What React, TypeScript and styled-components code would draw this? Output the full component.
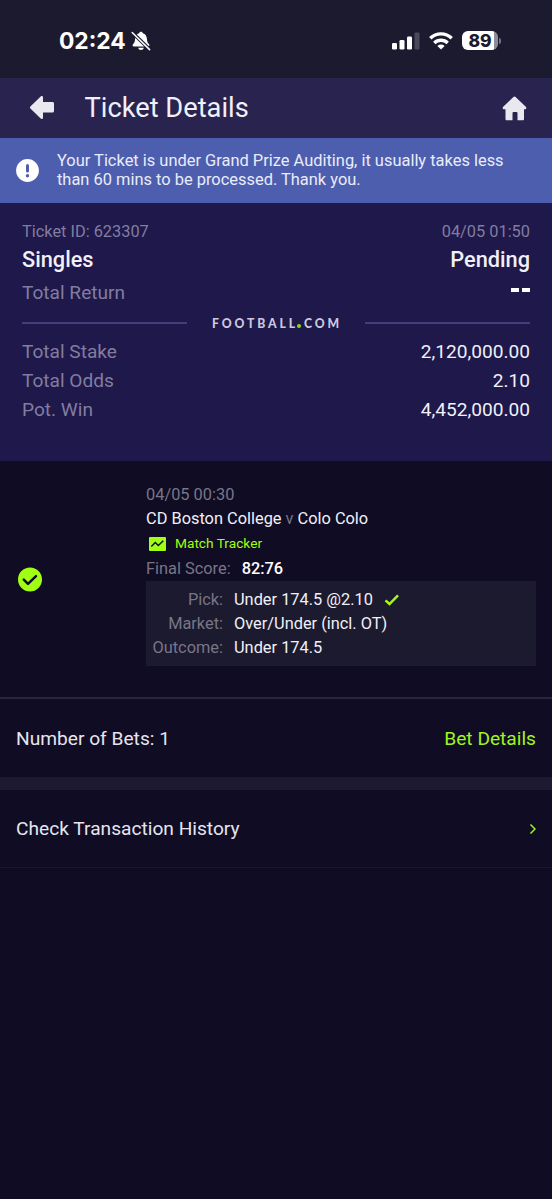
import React from "react";
import styled, { createGlobalStyle } from "styled-components";

const Global = createGlobalStyle`
  * { box-sizing: border-box; }
  body { margin: 0; background: #0f0c24; }
`;

const Screen = styled.div`
  display: flex;
  flex-direction: column;
  width: 100%;
  min-height: 1199px;
  background: #0f0c24;
  color: #f1f0f8;
  font-family: Roboto, "Liberation Sans", sans-serif;
  font-size: 19.17px;
`;

const StatusBar = styled.div`
  display: flex;
  align-items: center;
  justify-content: space-between;
  height: 78px;
  padding: 3px 51px 0 59px;
  background: #1c1a2e;
  color: #fff;
`;

const StatusGroup = styled.div<{ $gap: number }>`
  display: flex;
  align-items: center;
  gap: ${(p) => p.$gap}px;
`;

const Clock = styled.span`
  font: 700 22.8px/28px Inter, sans-serif;
`;

const Battery = styled.div`
  display: flex;
  align-items: center;
  gap: 1px;
`;

const BatteryBody = styled.div`
  display: flex;
  justify-content: center;
  width: 36px;
  height: 19px;
  border-radius: 6px;
  background: linear-gradient(90deg, #fff 32px, #8d8c97 32px);
  color: #1c1a2e;
  font: 800 17.5px/20px Inter, sans-serif;
`;

const BatteryTip = styled.div`
  width: 2px;
  height: 6px;
  border-radius: 0 2px 2px 0;
  background: #777583;
`;

const Header = styled.header`
  display: flex;
  align-items: center;
  height: 60px;
  padding: 0 25px 0 29px;
  background: #28244f;
`;

const Title = styled.h1`
  flex: 1;
  margin: 0 0 0 29.5px;
  font-size: 27.25px;
  font-weight: 400;
  line-height: 60px;
`;

const Banner = styled.div`
  display: flex;
  align-items: center;
  height: 65px;
  padding: 0 16px;
  gap: 18px;
  background: #4e5eae;
  color: #e9ecfb;
`;

const BannerText = styled.p`
  margin: 0;
  padding-bottom: 1px;
  font-size: 16.43px;
  line-height: 19px;
`;

const Summary = styled.section`
  height: 258px;
  padding: 18px 22px 0;
  background: #1f184a;
`;

const SummaryRow = styled.div<{ $height: number; $size?: number; $weight?: number }>`
  display: flex;
  justify-content: space-between;
  height: ${(p) => p.$height}px;
  line-height: ${(p) => p.$height}px;
  font-size: ${(p) => p.$size ?? 19.1}px;
  font-weight: ${(p) => p.$weight ?? 400};
`;

const Muted = styled.span`
  color: #827da0;
`;

const Dashes = styled.span`
  display: flex;
  gap: 3px;
  padding-top: 12px;

  &::before,
  &::after {
    content: "";
    width: 8px;
    height: 3.5px;
    background: #fff;
  }
`;

const BrandRow = styled.div`
  display: flex;
  align-items: center;
  justify-content: space-between;
  height: 27px;
  padding-bottom: 2px;
`;

const Rule = styled.div`
  width: 165px;
  height: 2px;
  background: #453d75;
`;

const Brand = styled.div`
  display: flex;
  align-items: center;
  margin-right: -2px;
  padding-top: 2px;
  color: #cbc8dd;
  font: 900 12.2px/14px Lato, sans-serif;
  letter-spacing: 2.9px;
`;

const BrandDot = styled.i`
  width: 4px;
  height: 4px;
  margin: 5px 3px 0 -1px;
  border-radius: 50%;
  background: #8fd51b;
`;

const Bet = styled.section`
  display: flex;
  align-items: center;
  height: 238px;
  padding: 0 16px 0 18px;
  border-bottom: 2px solid #29263f;
`;

const BetInfo = styled.div`
  flex: 1;
  margin-left: 104px;
  padding-bottom: 9px;
  font-size: 16.38px;
`;

const BetLine = styled.div<{ $height: number; $gap?: number; $indent?: number }>`
  display: flex;
  align-items: center;
  gap: ${(p) => p.$gap ?? 0}px;
  height: ${(p) => p.$height}px;
  padding-left: ${(p) => p.$indent ?? 0}px;
  line-height: ${(p) => p.$height}px;
  white-space: pre;
`;

const Dim = styled.span`
  color: #787587;
`;

const Tracker = styled.span`
  color: #a0ff14;
  font-size: 13.7px;
`;

const Score = styled.span`
  font-weight: 500;
  color: #fff;
`;

const PickBox = styled.div`
  display: grid;
  grid-template-columns: 77px 1fr;
  grid-auto-rows: 24px;
  column-gap: 11px;
  height: 85px;
  padding-top: 7px;
  background: #1c1a2e;
  line-height: 24px;
`;

const PickLabel = styled(Dim)`
  text-align: right;
`;

const PickValue = styled.span`
  display: flex;
  align-items: center;
  gap: 11px;
`;

const ListRow = styled.div<{ $height: number }>`
  display: flex;
  align-items: center;
  justify-content: space-between;
  height: ${(p) => p.$height}px;
  padding: 0 16px;
  color: #e6e5ee;
`;

const Band = styled.div`
  height: 13px;
  background: #1c1a2e;
`;

const HistoryRow = styled(ListRow)`
  padding-bottom: 1px;
  border-bottom: 1px solid #1a172e;
`;

const Link = styled.span`
  color: #a0f51e;
`;

const BellOff = () => (
  <svg width="20" height="20" viewBox="0 0 20 20">
    <path d="M10 .8c.9 0 1.600.6 1.800 1.400 2.600.8 4 2.900 4.100 5.500.1 3.200.9 4.300 2.100 5.500.8.9.5 2.200-.9 2.200H2.900c-1.400 0-1.700-1.300-.9-2.200 1.200-1.200 2-2.300 2.100-5.500.1-2.600 1.500-4.700 4.100-5.500C8.400 1.400 9.100.8 10 .8zM7.200 16.800h5.600c-.3 1.400-1.400 2.200-2.800 2.200s-2.500-.8-2.800-2.200z" fill="#fff" />
    <path d="M1.300 1.500l17.400 17" stroke="#1c1a2e" strokeWidth="3.600" />
    <path d="M1.200 1.500l17.400 17.100" stroke="#fff" strokeWidth="1.500" strokeLinecap="round" />
  </svg>
);

const Signal = () => (
  <svg width="28" height="18" viewBox="0 0 28 18" fill="#fff">
    <rect x="0" y="11" width="5" height="6.500" rx="1.300" />
    <rect x="7.500" y="8" width="5" height="9.500" rx="1.300" />
    <rect x="15" y="4.500" width="5" height="13" rx="1.300" />
    <rect x="22.500" y="0.500" width="5" height="17" rx="1.300" fill="#4b4959" />
  </svg>
);

const Wifi = () => (
  <svg width="24" height="18" viewBox="0 0 24 18" fill="none" stroke="#fff" strokeWidth="3.400">
    <path d="M1.300 6.300a15.200 15.200 0 0 1 21.400 0" />
    <path d="M5.300 11a9.600 9.600 0 0 1 13.400 0" />
    <path d="M12 17.600l-3.600-3.700a5.200 5.200 0 0 1 7.200 0z" fill="#fff" stroke="none" />
  </svg>
);

const BackArrow = () => (
  <svg width="26" height="24" viewBox="0 0 26 24" fill="#e9e8ee">
    <path d="M1.400 10.500L11.700.4c.9-.8 2.300-.3 2.300.9V6h9.500c.9 0 1.500.6 1.500 1.500V15c0 .9-.6 1.500-1.500 1.500H14v5.200c0 1.200-1.400 1.700-2.300.9L1.400 12.500c-.6-.6-.6-1.400 0-2z" />
  </svg>
);

const Home = () => (
  <svg width="25" height="25" viewBox="0 0 25 25" fill="#e9e8ee">
    <path d="M11.400 1c.7-.7 1.500-.7 2.200 0l10.200 9.800c1 1 .4 2.400-.8 2.400h-1V23c0 .8-.5 1.300-1.300 1.300h-5.200v-7c0-.8-.5-1.300-1.200-1.300h-2.600c-.7 0-1.200.5-1.200 1.300v7H4.800c-.8 0-1.300-.5-1.300-1.300v-9.800H2c-1.200 0-1.800-1.400-.8-2.400z" />
  </svg>
);

const Alert = () => (
  <svg width="23" height="23" viewBox="0 0 23 23">
    <circle cx="11.500" cy="11.500" r="11.400" fill="#fff" />
    <path d="M11.500 6.400v5.600" stroke="#4e5eae" strokeWidth="3" strokeLinecap="round" />
    <circle cx="11.500" cy="16.700" r="1.700" fill="#4e5eae" />
  </svg>
);

const WonBadge = () => (
  <svg width="24" height="26" viewBox="0 0 24 26">
    <circle cx="12" cy="13.500" r="12" fill="#a0ff14" />
    <path d="M5.800 13.700l4.200 4.200 8-7.700" fill="none" stroke="#0f0c24" strokeWidth="2.500" strokeLinecap="round" strokeLinejoin="round" />
  </svg>
);

const TrackerIcon = () => (
  <svg width="17" height="14" viewBox="0 0 17 14">
    <rect width="17" height="14" rx="1" fill="#a0ff14" />
    <path d="M2.300 9.500l4-4 3 3 5-4.800" fill="none" stroke="#0f0c24" strokeWidth="1.500" />
  </svg>
);

const Tick = () => (
  <svg width="15" height="12" viewBox="0 0 15 12" fill="none" stroke="#a8f51c" strokeWidth="2.500">
    <path d="M1.500 6.300l4 3.700 8.500-8.700" />
  </svg>
);

const Chevron = () => (
  <svg width="7" height="11" viewBox="0 0 7 11" fill="none" stroke="#a0f51e" strokeWidth="1.500">
    <path d="M1.500 1.500l4.500 4.500-4.500 4.500" />
  </svg>
);

export default function App() {
  return (
    <Screen>
      <Global />
      <StatusBar>
        <StatusGroup $gap={5}>
          <Clock>02:24</Clock>
          <BellOff />
        </StatusGroup>
        <StatusGroup $gap={9}>
          <Signal />
          <Wifi />
          <Battery>
            <BatteryBody>89</BatteryBody>
            <BatteryTip />
          </Battery>
        </StatusGroup>
      </StatusBar>

      <Header>
        <BackArrow />
        <Title>Ticket Details</Title>
        <Home />
      </Header>

      <Banner>
        <Alert />
        <BannerText>
          Your Ticket is under Grand Prize Auditing, it usually takes less
          <br />
          than 60 mins to be processed. Thank you.
        </BannerText>
      </Banner>

      <Summary>
        <SummaryRow $height={22} $size={16.35}>
          <Muted>Ticket ID: 623307</Muted>
          <Muted>04/05 01:50</Muted>
        </SummaryRow>
        <SummaryRow $height={33} $size={21.75} $weight={500}>
          <span>Singles</span>
          <span>Pending</span>
        </SummaryRow>
        <SummaryRow $height={34}>
          <Muted>Total Return</Muted>
          <Dashes />
        </SummaryRow>
        <BrandRow>
          <Rule />
          <Brand>
            FOOTBALL
            <BrandDot />
            COM
          </Brand>
          <Rule />
        </BrandRow>
        <SummaryRow $height={29}>
          <Muted>Total Stake</Muted>
          <span>2,120,000.00</span>
        </SummaryRow>
        <SummaryRow $height={29}>
          <Muted>Total Odds</Muted>
          <span>2.10</span>
        </SummaryRow>
        <SummaryRow $height={29}>
          <Muted>Pot. Win</Muted>
          <span>4,452,000.00</span>
        </SummaryRow>
      </Summary>

      <Bet>
        <WonBadge />
        <BetInfo>
          <BetLine $height={24}>
            <Dim>04/05 00:30</Dim>
          </BetLine>
          <BetLine $height={24}>
            CD Boston College<Dim> v </Dim>Colo Colo
          </BetLine>
          <BetLine $height={25} $gap={9} $indent={3}>
            <TrackerIcon />
            <Tracker>Match Tracker</Tracker>
          </BetLine>
          <BetLine $height={25} $gap={11}>
            <Dim>Final Score:</Dim>
            <Score>82:76</Score>
          </BetLine>
          <PickBox>
            <PickLabel>Pick:</PickLabel>
            <PickValue>
              Under 174.5 @2.10
              <Tick />
            </PickValue>
            <PickLabel>Market:</PickLabel>
            <PickValue>Over/Under (incl. OT)</PickValue>
            <PickLabel>Outcome:</PickLabel>
            <PickValue>Under 174.5</PickValue>
          </PickBox>
        </BetInfo>
      </Bet>

      <ListRow $height={78}>
        <span>Number of Bets: 1</span>
        <Link>Bet Details</Link>
      </ListRow>
      <Band />
      <HistoryRow $height={78}>
        <span>Check Transaction History</span>
        <Chevron />
      </HistoryRow>
    </Screen>
  );
}
